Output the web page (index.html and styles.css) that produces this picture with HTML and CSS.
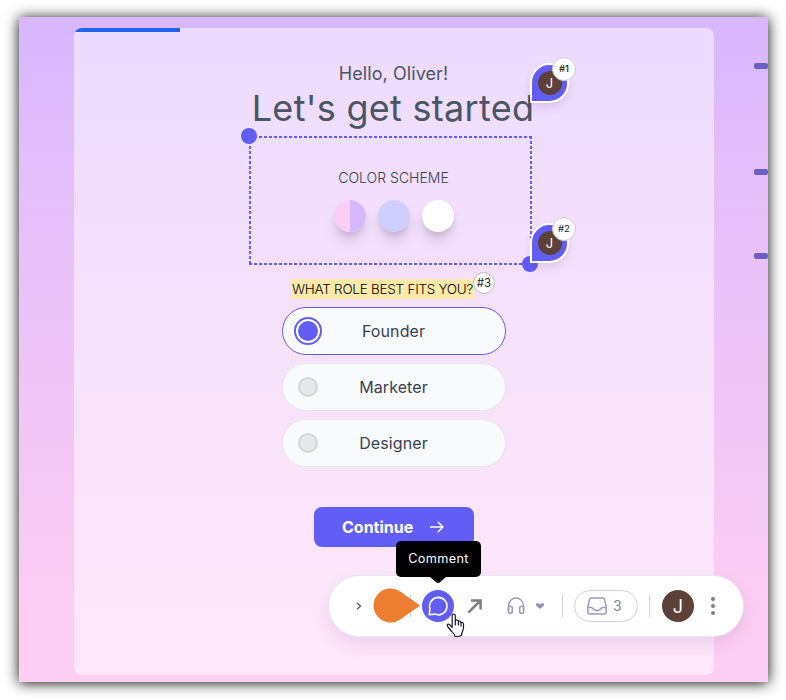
FILE: index.html
```html
<!DOCTYPE html>
<html lang="en">
<head>
<meta charset="utf-8">
<title>Onboarding</title>
<link rel="stylesheet" href="styles.css">
</head>
<body>
<div class="window">
  <main class="card">
    <div class="progress"></div>
    <p class="hello">Hello, Oliver!</p>
    <h1 class="title">Let's get started</h1>
    <section class="scheme">
      <h2 class="scheme-label">COLOR SCHEME</h2>
      <div class="swatches">
        <span class="swatch swatch-split"></span>
        <span class="swatch swatch-blue"></span>
        <span class="swatch swatch-white"></span>
      </div>
      <span class="handle handle-start"></span>
      <span class="handle handle-end"></span>
    </section>
    <h2 class="question"><span class="mark">WHAT ROLE BEST FITS YOU?</span><span class="tag tag-question">#3</span></h2>
    <div class="options">
      <div class="option selected"><span class="radio"></span>Founder</div>
      <div class="option"><span class="radio"></span>Marketer</div>
      <div class="option"><span class="radio"></span>Designer</div>
    </div>
    <div class="continue"><span>Continue</span>
      <svg width="14" height="12" viewBox="0 0 14 12"><path d="M.6 6h12M8.2 1.2 13 6l-4.800 4.800" fill="none" stroke="#fff" stroke-width="1.4" stroke-linecap="round" stroke-linejoin="round"/></svg>
    </div>
  </main>

  <div class="pin pin-one"><span class="pin-avatar">J</span><span class="tag tag-bold">#1</span></div>
  <div class="pin pin-two"><span class="pin-avatar">J</span><span class="tag">#2</span></div>
  <span class="tick tick-one"></span>
  <span class="tick tick-two"></span>
  <span class="tick tick-three"></span>

  <div class="toolbar">
    <svg class="chevron" width="6" height="8" viewBox="0 0 6 8"><path d="m1 .7 3.500 3.300L1 7.300" fill="none" stroke="#66666e" stroke-width="1.500"/></svg>
    <span class="divider divider-first"></span>
    <div class="comment">
      <svg width="20" height="20" viewBox="0 0 20 20"><path d="M1.200 18.800 2 12.700a8.700 8.700 0 1 1 4.900 5.400Z" fill="none" stroke="#fff" stroke-width="1.600" stroke-linejoin="round"/></svg>
      <div class="tooltip">Comment</div>
    </div>
    <svg class="arrow" width="16" height="16" viewBox="0 0 16 16"><path d="M1.300 14.700 13 3M4 2.400H13.600V11.600" fill="none" stroke="#7f7f88" stroke-width="2.500"/></svg>
    <svg class="headphones" width="18" height="18" viewBox="0 0 18 18"><path d="M1.600 13V8.400a7.400 7.400 0 0 1 14.800 0V13" fill="none" stroke="#989bbd" stroke-width="1.400"/><rect x="1.300" y="9.300" width="4" height="7" rx="1.800" fill="none" stroke="#989bbd" stroke-width="1.500"/><rect x="12.700" y="9.300" width="4" height="7" rx="1.800" fill="none" stroke="#989bbd" stroke-width="1.500"/></svg>
    <svg class="caret" width="8" height="6" viewBox="0 0 8 6"><path d="M0 1.500Q0 0 1.500 0L4 1.500 6.500 0Q8 0 8 1.500L7.600 2.700 4 6 .4 2.700Z" fill="#8e91ba"/></svg>
    <span class="divider"></span>
    <div class="inbox">
      <svg width="20" height="18" viewBox="0 0 20 18"><path d="M4.400 1h11.200q1.500 0 1.900 1.300l1.700 7.500V15q0 2-2 2H2.800q-2 0-2-2V9.800l1.700-7.500Q2.900 1 4.400 1ZM.8 10.500H4q1.500 0 2 1.100.7 1.900 4 1.900t4-1.900q.5-1.100 2-1.100h3.200" fill="none" stroke="#989bbd" stroke-width="1.500" stroke-linejoin="round"/></svg>
      <span>3</span>
    </div>
    <span class="divider divider-last"></span>
    <span class="avatar">J</span>
    <span class="dots"><i></i><i></i><i></i></span>
    <svg class="pointer" width="48" height="36" viewBox="0 0 48 36"><path d="M47 17.500 27.300 31.400A17 17 0 1 1 27.300 3.600Z" fill="#ed7d31"/></svg>
    <svg class="cursor" width="19" height="25" viewBox="0 0 19 25"><path d="M6.200 14.500V2.700Q6.200 1 7.800 1q1.500 0 1.500 1.700V8q.5-1.200 1.600-1t1.500 1.500q1.200-1 2 .1l.5 1q2-.9 2.600 1.200.3 6-1.600 9.100l-.4 2.300Q13 24 9 23.300q-.2-1.900-2.500-3.900L2.700 15q-2.300-2.800-1-3.700 1.500-.9 4.500 3.200Z" fill="#fff" stroke="#15152a" stroke-width="1.200" stroke-linejoin="round"/><path d="M9.300 8v4M12.400 8.500V12M15 9.600V13" fill="none" stroke="#15152a" stroke-width="1.200" stroke-linecap="round"/></svg>
  </div>
</div>
</body>
</html>
```

FILE: styles.css
```css
* { box-sizing: border-box; }

body {
  margin: 0;
  height: 700px;
  padding: 17px 18px 18px 19px;
  overflow: hidden;
  background: #fff;
  font-family: Inter, "Liberation Sans", sans-serif;
}

svg { display: block; flex: none; }

.window {
  position: relative;
  height: 665px;
  padding: 11px 54px 7px 55px;
  background: linear-gradient(#d7b7ff, #e4befb 24%, #f2c7f6 63%, #fdcef3 92%);
  box-shadow: 0 1px 13px rgba(0, 0, 0, .95);
}

.card {
  display: flex;
  flex-direction: column;
  align-items: center;
  height: 647px;
  border-radius: 8px;
  overflow: hidden;
  background: rgba(255, 255, 255, .5);
}

.progress {
  align-self: flex-start;
  width: 106px;
  height: 4px;
  background: #2563eb;
}

.hello {
  margin: 28px 1px 0 0;
  font-size: 18px;
  line-height: 28px;
  letter-spacing: .08px;
  color: #4b5563;
}

.title {
  margin: 0 2px 0 0;
  font-size: 36px;
  font-weight: 400;
  line-height: 40px;
  letter-spacing: .28px;
  white-space: nowrap;
  color: #4b5563;
}

.scheme {
  position: relative;
  flex: none;
  width: 283px;
  height: 129px;
  margin: 8px 8px 0 0;
  padding: 31px 0 0 7px;
  background:
    repeating-linear-gradient(90deg, #625df5 0 3px, transparent 3px 5px) top / 100% 2px no-repeat,
    repeating-linear-gradient(90deg, #625df5 0 3px, transparent 3px 5px) bottom / 100% 2px no-repeat,
    repeating-linear-gradient(#625df5 0 3px, transparent 3px 5px) left / 2px 100% no-repeat,
    repeating-linear-gradient(#625df5 0 3px, transparent 3px 5px) right / 2px 100% no-repeat;
}

.scheme-label {
  margin: 0;
  text-align: center;
  font-size: 14px;
  font-weight: 300;
  line-height: 21px;
  color: #374151;
}

.swatches {
  display: flex;
  justify-content: center;
  gap: 12px;
  margin-top: 12px;
}

.swatch {
  width: 32px;
  height: 32px;
  border-radius: 50%;
  box-shadow: 0 10px 15px -3px rgba(0, 0, 0, .16), 0 4px 6px -2px rgba(0, 0, 0, .12);
}

.swatch-split { background: linear-gradient(90deg, #fdcef3 50%, #d7b8ff 50%); }
.swatch-blue { background: #d0ceff; }
.swatch-white { background: #fff; }

.handle {
  position: absolute;
  width: 16px;
  height: 16px;
  border-radius: 50%;
  background: #625df5;
}

.handle-start { left: -8px; top: -8px; }
.handle-end { right: -6px; bottom: -7px; }

.question {
  display: flex;
  align-items: flex-start;
  position: relative;
  width: 204px;
  height: 20px;
  margin: 14px 0 0;
  font-size: 13.5px;
  font-weight: 300;
  line-height: 20px;
  color: #000;
}

.mark {
  width: 181px;
  height: 20px;
  text-align: center;
  white-space: nowrap;
  letter-spacing: -.26px;
  background: #ffe9ab;
}

.tag {
  display: flex;
  align-items: center;
  justify-content: center;
  position: absolute;
  width: 24px;
  height: 24px;
  border: 1px solid #ccc9cf;
  border-radius: 50%;
  background: #fff;
  font-size: 9.5px;
  font-weight: 400;
  color: #222;
}

.pin .tag {
  right: -9px;
  top: -8px;
  padding-bottom: 2px;
}

.tag-bold { font-weight: 500; }

.tag-question {
  left: 181px;
  top: -7px;
  width: 22px;
  height: 22px;
  font-size: 11.5px;
  border-color: #bbb;
}

.options {
  display: flex;
  flex-direction: column;
  gap: 8px;
  width: 224px;
  margin-top: 8px;
}

.option {
  display: grid;
  grid-template-columns: 28px 1fr 29px;
  align-items: center;
  height: 48px;
  padding: 0 11px;
  border: 1px solid #e5e7eb;
  border-radius: 24px;
  background: #f9fafb;
  text-align: center;
  font-size: 16px;
  letter-spacing: .1px;
  color: #374151;
}

.option.selected { border-color: #625df5; }

.radio {
  width: 20px;
  height: 20px;
  justify-self: center;
  border: 2px solid #d1d5db;
  border-radius: 50%;
  background: #e5e7eb;
}

.selected .radio {
  border: 0;
  background: #625df5;
  box-shadow: 0 0 0 2px #fff, 0 0 0 4px #625df5;
}

.continue {
  display: flex;
  align-items: center;
  gap: 17px;
  flex: none;
  width: 160px;
  height: 40px;
  margin-top: 40px;
  padding-left: 28px;
  border-radius: 8px;
  background: #625df5;
  color: #fff;
  font-size: 16px;
  font-weight: 700;
}

.pin {
  display: flex;
  align-items: center;
  justify-content: center;
  position: absolute;
  width: 39px;
  height: 40px;
  left: 511px;
  border: 2px solid #fff;
  border-radius: 20px 20px 20px 0;
  background: #625df5;
  box-shadow: 0 5px 9px rgba(80, 40, 130, .12);
}

.pin-one { top: 46px; }
.pin-two { top: 206px; }

.pin-avatar, .avatar {
  display: flex;
  align-items: center;
  justify-content: center;
  flex: none;
  border-radius: 50%;
  background: #5d4037;
  color: #fff;
}

.pin-avatar {
  width: 24px;
  height: 24px;
  font-size: 13px;
  font-weight: 400;
}

.tick {
  position: absolute;
  right: 0;
  width: 14px;
  height: 6px;
  border-radius: 2px;
  background: #6960c4;
}

.tick-one { top: 46px; }
.tick-two { top: 152px; }
.tick-three { top: 236px; }

.toolbar {
  display: flex;
  align-items: center;
  position: absolute;
  left: 309px;
  top: 558px;
  width: 416px;
  height: 62px;
  padding-left: 27px;
  border: 1px solid #e5e7eb;
  border-radius: 31px;
  background: #fff;
  box-shadow: 0 8px 16px rgba(110, 60, 160, .12);
}

.divider {
  width: 1px;
  height: 22px;
  margin-left: 18px;
  background: #d0d0e0;
}

.divider-first { margin-left: 48px; }
.divider-last { margin-left: 11px; }

.comment {
  display: flex;
  align-items: center;
  justify-content: center;
  position: relative;
  width: 32px;
  height: 32px;
  margin-left: 11px;
  border-radius: 50%;
  background: #625df5;
}

.tooltip {
  position: absolute;
  left: -26px;
  top: -49px;
  width: 85px;
  height: 36px;
  border-radius: 5px;
  background: #000;
  color: #fff;
  text-align: center;
  font-size: 12.7px;
  line-height: 36px;
  letter-spacing: .35px;
}

.tooltip::after {
  content: "";
  position: absolute;
  left: 34px;
  top: 36px;
  width: 16px;
  height: 6px;
  background: #000;
  clip-path: polygon(0 0, 100% 0, 60% 90%, 50% 100%, 40% 90%);
}

.arrow { margin-left: 13px; }
.headphones { margin-left: 24px; }
.caret { margin-left: 11px; }

.inbox {
  display: flex;
  align-items: center;
  width: 64px;
  height: 32px;
  margin-left: 11px;
  padding-left: 12px;
  gap: 6px;
  border: 1px solid #d0d0e0;
  border-radius: 16px;
  font-size: 14px;
  line-height: 18px;
  color: #8588a8;
}

.inbox span { padding-bottom: 1px; }

.avatar {
  width: 32px;
  height: 32px;
  margin-left: 12px;
  font-size: 18px;
}

.dots {
  display: flex;
  flex-direction: column;
  gap: 3px;
  margin-left: 17px;
}

.dots i {
  width: 4px;
  height: 4px;
  border-radius: 50%;
  background: #7c7c85;
}

.pointer { position: absolute; left: 44px; top: 12px; }
.cursor { position: absolute; left: 117px; top: 37px; }
```
